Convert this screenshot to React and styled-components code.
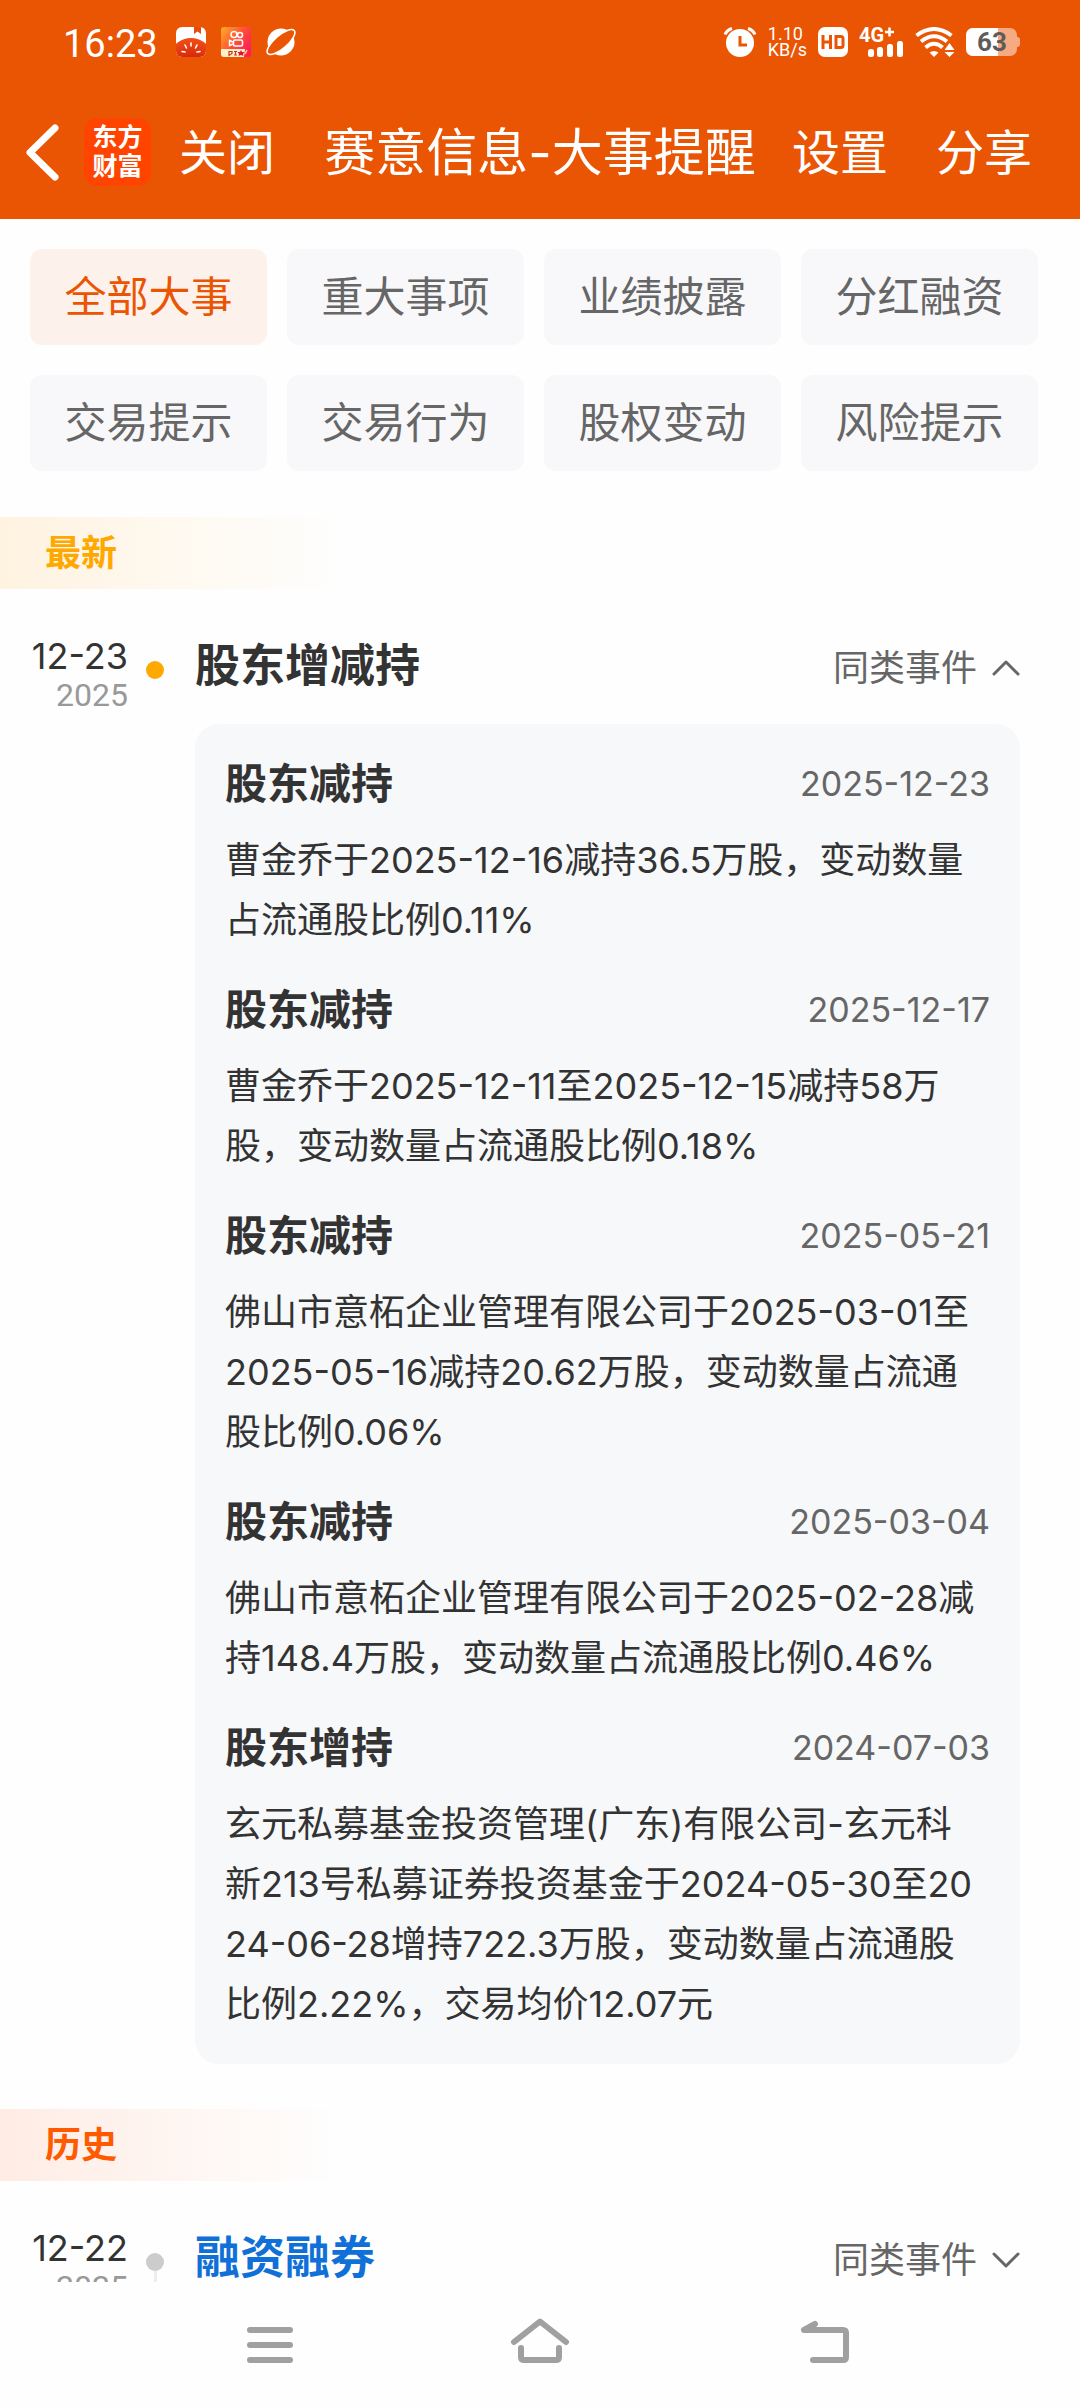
import { useState } from "react";
import styled, { createGlobalStyle } from "styled-components";

const GlobalStyle = createGlobalStyle`
  * {
    box-sizing: border-box;
  }

  body {
    margin: 0;
    background: #fefefe;
    color: #333;
    font-family: Inter, "Noto Sans CJK SC", sans-serif;
  }

  button {
    padding: 0;
    border: none;
    background: none;
    color: inherit;
    font-family: inherit;
    cursor: pointer;
  }

  h1, h2, h3, p {
    margin: 0;
  }

  svg {
    display: block;
    flex-shrink: 0;
  }
`;

const Page = styled.div`
  display: flex;
  flex-direction: column;
  height: 100vh;
`;

const Header = styled.header`
  background: #ea5504;
  color: #fff;
`;

const StatusBar = styled.div`
  display: flex;
  align-items: center;
  justify-content: space-between;
  height: 84px;
  padding: 0 60px 0 63px;
`;

const StatusGroup = styled.div`
  display: flex;
  align-items: center;
  gap: ${(props) => props.$gap}px;
`;

const Clock = styled.span`
  margin-right: 3px;
  padding-top: 4px;
  font-family: Roboto, sans-serif;
  font-size: 38px;
  line-height: 44px;
`;

const Speed = styled.span`
  display: flex;
  flex-direction: column;
  font-family: Roboto, sans-serif;
  font-size: 18px;
  line-height: 16px;
`;

const NavBar = styled.div`
  display: grid;
  grid-template-columns: 1fr auto 1fr;
  align-items: center;
  height: 135px;
  padding: 0 24px;
`;

const NavSide = styled.div`
  display: flex;
  align-items: center;
  justify-content: ${(props) => (props.$end ? "flex-end" : "flex-start")};
  gap: ${(props) => (props.$end ? 48 : 22)}px;
  padding-right: ${(props) => (props.$end ? 24 : 0)}px;
`;

const NavButton = styled.button`
  font-size: 48px;
  line-height: 60px;
`;

const NavLabel = styled.span`
  display: block;
  padding-top: 2px;
`;

const Logo = styled.span`
  display: flex;
  flex-direction: column;
  align-items: center;
  justify-content: center;
  width: 67px;
  height: 68px;
  margin-right: 6px;
  border-radius: 14px;
  background: #ff4400;
  font-size: 25px;
  font-weight: 700;
  line-height: 29px;
`;

const PageTitle = styled.h1`
  padding-top: 2px;
  font-size: 51px;
  font-weight: 400;
  line-height: 60px;
`;

const Content = styled.main`
  flex: 1;
  min-height: 0;
  overflow: hidden;
`;

const Filters = styled.div`
  display: grid;
  grid-template-columns: repeat(4, 1fr);
  gap: 30px 20px;
  padding: 30px 42px 46px 30px;
`;

const FilterButton = styled.button`
  height: 96px;
  border-radius: 12px;
  background: ${(props) => (props.$active ? "#fdf1eb" : "#f8f8fa")};
  color: ${(props) => (props.$active ? "#ea5504" : "#666")};
  font-size: 42px;
  line-height: 60px;
`;

const SectionLabel = styled.h2`
  width: 340px;
  padding-left: 45px;
  background: linear-gradient(to right, ${(props) => props.$tint}, #fefefe);
  color: ${(props) => props.$color};
  font-size: 36px;
  font-weight: 700;
  line-height: 72px;
`;

const Event = styled.article`
  display: grid;
  grid-template-columns: 98px 18px 1fr;
  column-gap: 18px;
  padding: 45px 60px 45px 30px;
`;

const EventDate = styled.time`
  display: flex;
  flex-direction: column;
  align-items: flex-end;
  font-size: 36px;
  line-height: 44px;
`;

const Year = styled.span`
  color: #999;
  font-family: Roboto, sans-serif;
  font-size: 32px;
  line-height: 34px;
`;

const Track = styled.div`
  display: flex;
  flex-direction: column;
  align-items: center;
  padding-top: 27px;
`;

const Dot = styled.span`
  width: 18px;
  height: 18px;
  border-radius: 50%;
  background: ${(props) => props.$color};
`;

const TrackLine = styled.span`
  flex: 1;
  width: 3px;
  background: #eee;
`;

const EventBody = styled.div`
  margin-left: 13px;
`;

const EventHead = styled.div`
  display: flex;
  align-items: flex-end;
  justify-content: space-between;
  height: 62px;
`;

const EventTitle = styled.h2`
  color: ${(props) => props.$color};
  font-size: 45px;
  font-weight: 700;
  line-height: 60px;
`;

const Toggle = styled.button`
  display: flex;
  align-items: center;
  gap: 15px;
  color: #666;
  font-size: 36px;
  line-height: 56px;
`;

const Card = styled.div`
  display: flex;
  flex-direction: column;
  gap: 30px;
  margin-top: 28px;
  padding: 30px;
  border-radius: 24px;
  background: #f7f8fa;
`;

const RecordHead = styled.div`
  display: flex;
  align-items: center;
  justify-content: space-between;
  margin-bottom: 16px;
`;

const RecordTitle = styled.h3`
  font-size: 42px;
  font-weight: 700;
  line-height: 60px;
`;

const RecordDate = styled.time`
  color: #666;
  font-size: 34px;
  line-height: 60px;
`;

const RecordText = styled.p`
  font-size: 36px;
  line-height: 60px;
  white-space: pre-line;
`;

const SystemNav = styled.nav`
  display: flex;
  justify-content: center;
  gap: 180px;
  padding: 18px 0;
  background: #fefefe;
`;

const filters = [
  "全部大事",
  "重大事项",
  "业绩披露",
  "分红融资",
  "交易提示",
  "交易行为",
  "股权变动",
  "风险提示",
];

const records = [
  {
    title: "股东减持",
    date: "2025-12-23",
    text: "曹金乔于2025-12-16减持36.5万股,变动数量\n占流通股比例0.11%",
  },
  {
    title: "股东减持",
    date: "2025-12-17",
    text: "曹金乔于2025-12-11至2025-12-15减持58万\n股,变动数量占流通股比例0.18%",
  },
  {
    title: "股东减持",
    date: "2025-05-21",
    text: "佛山市意柘企业管理有限公司于2025-03-01至\n2025-05-16减持20.62万股,变动数量占流通\n股比例0.06%",
  },
  {
    title: "股东减持",
    date: "2025-03-04",
    text: "佛山市意柘企业管理有限公司于2025-02-28减\n持148.4万股,变动数量占流通股比例0.46%",
  },
  {
    title: "股东增持",
    date: "2024-07-03",
    text: "玄元私募基金投资管理(广东)有限公司-玄元科\n新213号私募证券投资基金于2024-05-30至20\n24-06-28增持722.3万股,变动数量占流通股\n比例2.22%,交易均价12.07元",
  },
].map((record) => ({ ...record, text: record.text.replaceAll(",", "\uff0c") }));

const TomatoIcon = () => (
  <svg width="30" height="30" viewBox="0 0 30 30">
    <defs>
      <radialGradient id="tomato" cx="0.5" cy="1" r="0.9">
        <stop offset="0" stopColor="#c90d04" />
        <stop offset="1" stopColor="#ee4a16" />
      </radialGradient>
      <clipPath id="tomatoClip">
        <rect width="30" height="30" rx="6" />
      </clipPath>
    </defs>
    <g clipPath="url(#tomatoClip)">
      <rect width="30" height="30" fill="#fff" />
      <path d="M18 0h7v7l-3.500-2.500L18 7z" fill="#e8490c" />
      <ellipse cx="15" cy="26" rx="19" ry="15" fill="url(#tomato)" />
      <path
        d="M15 16v3M9 18l1.500 3M21 18l-1.500 3M6 24.500l3 .5M24 24.500l-3 .5"
        stroke="#fff"
        strokeWidth="1.600"
        strokeLinecap="round"
      />
    </g>
  </svg>
);

const CameraIcon = () => (
  <svg width="30" height="30" viewBox="0 0 30 30">
    <defs>
      <linearGradient id="camera" x1="0" y1="0" x2="1" y2="0.700">
        <stop offset="0" stopColor="#ffae27" />
        <stop offset="0.550" stopColor="#ff4f36" />
        <stop offset="1" stopColor="#fb1f58" />
      </linearGradient>
    </defs>
    <rect width="30" height="30" rx="3" fill="url(#camera)" />
    <g fill="none" stroke="#fff" strokeWidth="1.500">
      <circle cx="13" cy="7.500" r="3" />
      <circle cx="19" cy="8" r="2.500" />
      <rect x="12.500" y="13" width="9" height="6" rx="1.500" />
      <path d="M12 15l-3.500-1.500v5l3.500-1.500" />
    </g>
    <path d="M0 22h24l-1 8H3a3 3 0 0 1-3-3z" fill="#fff0c8" />
    <path
      d="M8 24.500h3v2l-3 2zM13 24.500h3M14.500 24.500v3.500M13 28h3"
      fill="none"
      stroke="#c8351e"
      strokeWidth="1.200"
    />
    <path d="M20 23l1 2h2.500l-1.500 2 .5 2-2.500-1-2.500 1 .5-2-1.500-2h2.500z" fill="#d9163a" />
    <path d="M26 23l-2 4" stroke="#ffd45c" strokeWidth="1.500" />
  </svg>
);

const PlanetIcon = () => (
  <svg width="30" height="30" viewBox="0 0 30 30">
    <circle cx="15" cy="15" r="13.500" fill="#fff" />
    <ellipse
      cx="15"
      cy="15"
      rx="17.500"
      ry="6.500"
      transform="rotate(-41 15 15)"
      fill="#ea5504"
      stroke="#fff"
      strokeWidth="1.600"
    />
  </svg>
);

const AlarmIcon = () => (
  <svg width="34" height="30" viewBox="0 0 34 30">
    <circle cx="17" cy="16" r="14" fill="#fff" />
    <path
      d="M2 7.500Q4 3 9 1.500M32 7.500Q30 3 25 1.500"
      fill="none"
      stroke="#fff"
      strokeWidth="3"
    />
    <path d="M17 9v9h7" fill="none" stroke="#ea5504" strokeWidth="3" />
  </svg>
);

const HdIcon = () => (
  <svg width="30" height="30" viewBox="0 0 30 30">
    <rect width="30" height="30" rx="7" fill="#fff" />
    <path
      d="M5 8v14M12.500 8v14M5 15h7.500M18 9.500v11h5a2 2 0 0 0 2-2v-7a2 2 0 0 0-2-2z"
      fill="none"
      stroke="#ea5504"
      strokeWidth="3"
    />
  </svg>
);

const SignalIcon = () => (
  <svg width="45" height="42" viewBox="0 -6 45 42" fill="#fff">
    <text
      x="0"
      y="15"
      fontFamily="Roboto, sans-serif"
      fontSize="20"
      fontWeight="700"
    >
      4G
    </text>
    <path d="M30.500 .5v9M26 5h9" stroke="#fff" strokeWidth="2.500" />
    <rect x="9" y="22" width="6" height="8" rx="2.500" />
    <rect x="18" y="20" width="6" height="10" rx="2.500" />
    <rect x="28" y="17" width="6" height="13" rx="2.500" />
    <rect x="38" y="14" width="6" height="16" rx="2.500" />
  </svg>
);

const WifiIcon = () => (
  <svg width="40" height="30" viewBox="0 0 40 30">
    <g fill="none" stroke="#fff" strokeWidth="4">
      <path d="M1.500 8.500Q19 -4.500 36.500 8.500" />
      <path d="M6 14.500Q19 4 32 14.500" />
      <path d="M10.500 20.500Q19 13 27.500 20.500" />
    </g>
    <path d="M14.500 25.500Q19 22.500 23.500 25.500L19 30z" fill="#fff" />
    <path d="M29.500 23l5-7 5 7zM29.500 25h10l-5 5z" fill="#fff" />
  </svg>
);

const BatteryIcon = () => (
  <svg width="54" height="28" viewBox="0 0 54 28">
    <rect width="51" height="28" rx="7" fill="#f5aa82" />
    <path d="M51 9q3 0 3 3v4q0 3-3 3z" fill="#f5aa82" />
    <path d="M7 0h25v28H7a7 7 0 0 1-7-7V7a7 7 0 0 1 7-7z" fill="#fff" />
    <text
      x="26"
      y="23"
      textAnchor="middle"
      fontFamily="Roboto, sans-serif"
      fontSize="26"
      fontWeight="700"
      fill="#5f5b59"
    >
      63
    </text>
  </svg>
);

const BackIcon = () => (
  <svg width="38" height="60" viewBox="0 0 38 60">
    <path
      d="M31 6L6 30.500L31 55"
      fill="none"
      stroke="#fff"
      strokeWidth="7"
      strokeLinecap="round"
      strokeLinejoin="round"
    />
  </svg>
);

const Chevron = ({ up }) => (
  <svg width="28" height="18" viewBox="0 0 28 18">
    <path
      d={up ? "M2 15L14 3L26 15" : "M2 3L14 15L26 3"}
      fill="none"
      stroke="#666"
      strokeWidth="3"
      strokeLinecap="round"
      strokeLinejoin="round"
    />
  </svg>
);

const SystemIcon = ({ d }) => (
  <svg width="90" height="90" viewBox="0 0 90 90">
    <path
      d={d}
      fill="none"
      stroke="#a0a0a0"
      strokeWidth="6"
      strokeLinecap="round"
      strokeLinejoin="round"
    />
  </svg>
);

const EventRow = ({ date, year, title, color, dot, line, open, onToggle, items }) => (
  <Event>
    <EventDate dateTime={`${year}-${date}`}>
      {date}
      <Year>{year}</Year>
    </EventDate>
    <Track>
      <Dot $color={dot} />
      {line && <TrackLine />}
    </Track>
    <EventBody>
      <EventHead>
        <EventTitle $color={color}>{title}</EventTitle>
        <Toggle onClick={onToggle} aria-expanded={open}>
          同类事件
          <Chevron up={open} />
        </Toggle>
      </EventHead>
      {open && items.length > 0 && (
        <Card>
          {items.map((item) => (
            <section key={item.date}>
              <RecordHead>
                <RecordTitle>{item.title}</RecordTitle>
                <RecordDate dateTime={item.date}>{item.date}</RecordDate>
              </RecordHead>
              <RecordText>{item.text}</RecordText>
            </section>
          ))}
        </Card>
      )}
    </EventBody>
  </Event>
);

const App = () => {
  const [filter, setFilter] = useState(filters[0]);
  const [latestOpen, setLatestOpen] = useState(true);
  const [historyOpen, setHistoryOpen] = useState(false);

  return (
    <Page>
      <GlobalStyle />
      <Header>
        <StatusBar>
          <StatusGroup $gap={15}>
            <Clock>16:23</Clock>
            <TomatoIcon />
            <CameraIcon />
            <PlanetIcon />
          </StatusGroup>
          <StatusGroup $gap={11}>
            <AlarmIcon />
            <Speed>
              <span>1.10</span>
              <span>KB/s</span>
            </Speed>
            <HdIcon />
            <SignalIcon />
            <WifiIcon />
            <BatteryIcon />
          </StatusGroup>
        </StatusBar>
        <NavBar>
          <NavSide>
            <NavButton aria-label="返回">
              <BackIcon />
            </NavButton>
            <Logo>
              <span>东方</span>
              <span>财富</span>
            </Logo>
            <NavButton>
              <NavLabel>关闭</NavLabel>
            </NavButton>
          </NavSide>
          <PageTitle>赛意信息-大事提醒</PageTitle>
          <NavSide $end>
            <NavButton>
              <NavLabel>设置</NavLabel>
            </NavButton>
            <NavButton>
              <NavLabel>分享</NavLabel>
            </NavButton>
          </NavSide>
        </NavBar>
      </Header>

      <Content>
        <Filters>
          {filters.map((name) => (
            <FilterButton
              key={name}
              $active={name === filter}
              onClick={() => setFilter(name)}
            >
              {name}
            </FilterButton>
          ))}
        </Filters>

        <SectionLabel $color="#ffa800" $tint="#fff3e0">
          最新
        </SectionLabel>
        <EventRow
          date="12-23"
          year="2025"
          title="股东增减持"
          color="#333"
          dot="#ffa800"
          open={latestOpen}
          onToggle={() => setLatestOpen(!latestOpen)}
          items={records}
        />

        <SectionLabel $color="#ff5a00" $tint="#ffece4">
          历史
        </SectionLabel>
        <EventRow
          date="12-22"
          year="2025"
          title="融资融券"
          color="#1070d8"
          dot="#ccc"
          line
          open={historyOpen}
          onToggle={() => setHistoryOpen(!historyOpen)}
          items={[]}
        />
      </Content>

      <SystemNav>
        <NavButton aria-label="菜单">
          <SystemIcon d="M25 30H65M25 45H65M25 60H65" />
        </NavButton>
        <NavButton aria-label="主页">
          <SystemIcon d="M19 42L45 21.500L71 42M26 48V57Q26 60 29 60H61Q64 60 64 57V48" />
        </NavButton>
        <NavButton aria-label="后退">
          <SystemIcon d="M50 24L39 30H78Q81 30 81 33V57Q81 60 78 60H48" />
        </NavButton>
      </SystemNav>
    </Page>
  );
};

export default App;
